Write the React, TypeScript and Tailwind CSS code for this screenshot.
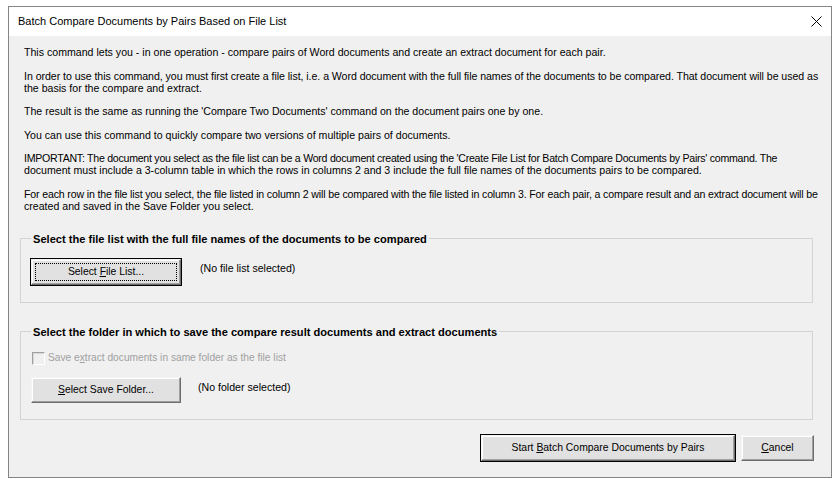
import React from "react";

const font = "font-['Liberation_Sans',Arial,sans-serif]";

function WinButton({
  children,
  width,
  isDefault = false,
  focused = false,
}: {
  children: React.ReactNode;
  width: string;
  isDefault?: boolean;
  focused?: boolean;
}) {
  const face = (
    <div className="flex flex-1 bg-[#e1e1e1] border-t border-l border-[#f4f4f4] border-r border-b border-r-[#6d6d6d] border-b-[#6d6d6d] shadow-[inset_-1px_-1px_#a0a0a0,inset_1px_1px_#ffffff] p-[3px]">
      <div
        className={
          "flex flex-1 items-center justify-center text-[10.4px] text-black " +
          (focused ? "border border-dotted border-black" : "border border-transparent")
        }
      >
        {children}
      </div>
    </div>
  );
  if (isDefault) {
    return (
      <div className={`flex border border-black h-[28px] ${width}`}>{face}</div>
    );
  }
  return <div className={`flex h-[26px] ${width}`}>{face}</div>;
}

export default function App() {
  return (
    <div className={`w-[834px] h-[479px] bg-white pt-[6px] pl-[8px] ${font}`}>
      <div className="w-[824px] h-[472px] border border-[#858585] flex flex-col bg-[#f0f0f0] overflow-hidden">
        {/* title bar */}
        <div className="h-[29px] bg-white flex items-center justify-between pl-[9px] pr-[8px]">
          <span className="text-[11px] text-black">Batch Compare Documents by Pairs Based on File List</span>
          <svg width="11" height="11" viewBox="0 0 11 11" className="mr-[1px]">
            <path d="M0.5 0.5 L10.5 10.5 M10.5 0.5 L0.5 10.5" stroke="#000" strokeWidth="1" />
          </svg>
        </div>

        {/* body */}
        <div className="flex flex-col pl-[11px] pr-[18px] text-[10.6px] text-black">
          <div className="pl-[4px] pt-[10px] leading-[12px] whitespace-nowrap">
            <p className="mb-[11.5px]">
              This command lets you - in one operation - compare pairs of Word documents and create an extract document for each pair.
            </p>
            <p className="mb-[11.5px]">
              <span className="tracking-[-0.05px]">
                In order to use this command, you must first create a file list, i.e. a Word document with the full file names of the documents to be compared. That document will be used as
              </span>
              <br />
              the basis for the compare and extract.
            </p>
            <p className="mb-[11.5px]">
              The result is the same as running the 'Compare Two Documents' command on the document pairs one by one.
            </p>
            <p className="mb-[11.5px]">
              You can use this command to quickly compare two versions of multiple pairs of documents.
            </p>
            <p className="mb-[11.5px]">
              <span className="tracking-[-0.26px]">
                IMPORTANT: The document you select as the file list can be a Word document created using the 'Create File List for Batch Compare Documents by Pairs' command. The
              </span>
              <br />
              document must include a 3-column table in which the rows in columns 2 and 3 include the full file names of the documents pairs to be compared.
            </p>
            <p>
              <span className="tracking-[-0.16px]">
                For each row in the file list you select, the file listed in column 2 will be compared with the file listed in column 3. For each pair, a compare result and an extract document will be
              </span>
              <br />
              created and saved in the Save Folder you select.
            </p>
          </div>

          {/* group 1 */}
          <fieldset className="mt-[21px] h-[70px] border border-[#d3d3d3] pl-[10px]">
            <legend className="px-[2px] font-bold leading-[12px] text-[11.1px]">
              Select the file list with the full file names of the documents to be compared
            </legend>
            <div className="flex items-start mt-[13px] ml-[-1px]">
              <WinButton width="w-[152px]" isDefault focused>
                <span>
                  Select <u>F</u>ile List...
                </span>
              </WinButton>
              <span className="ml-[18px] mt-[3px]">(No file list selected)</span>
            </div>
          </fieldset>

          {/* group 2 */}
          <fieldset className="mt-[23px] h-[94px] border border-[#d3d3d3] pl-[10px]">
            <legend className="px-[2px] font-bold leading-[12px] text-[11.1px]">
              Select the folder in which to save the compare result documents and extract documents
            </legend>
            <div className="flex items-center mt-[14px] ml-[1px] h-[13px]">
              <div className="w-[13px] h-[13px] bg-[#f0f0f0] border border-t-[#a0a0a0] border-l-[#a0a0a0] border-r-[#ffffff] border-b-[#ffffff] shadow-[inset_1px_1px_#d8d8d8]" />
              <span className="ml-[3px] text-[#a0a0a0] text-[10.2px]">
                Save e<u>x</u>tract documents in same folder as the file list
              </span>
            </div>
            <div className="flex items-start mt-[12px]">
              <WinButton width="w-[150px]">
                <span>
                  <u>S</u>elect Save Folder...
                </span>
              </WinButton>
              <span className="ml-[17px] mt-[3px]">(No folder selected)</span>
            </div>
          </fieldset>

          {/* bottom buttons */}
          <div className="flex justify-end items-center gap-[5px] mt-[14px] mr-[-1px]">
            <WinButton width="w-[256px]" isDefault>
              <span>
                Start <u>B</u>atch Compare Documents by Pairs
              </span>
            </WinButton>
            <WinButton width="w-[73px]">
              <span>
                <u>C</u>ancel
              </span>
            </WinButton>
          </div>
        </div>
      </div>
    </div>
  );
}
